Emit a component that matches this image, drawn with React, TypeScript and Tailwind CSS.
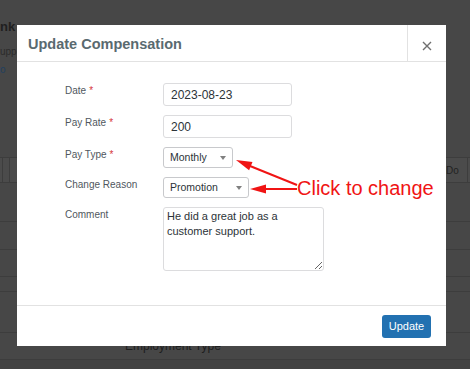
import React from 'react';

const Label = ({ text, required }: { text: string; required?: boolean }) => (
  <div className="pt-[1px] text-[10px] leading-[14px] text-[#50575e]">
    {text}
    {required && <span className="ml-[3px] text-[#d63638]">*</span>}
  </div>
);

const Select = ({ value, width }: { value: string; width: string }) => (
  <div
    className={`flex h-[21px] ${width} items-center justify-between rounded-[3px] border border-[#c8c9cc] bg-white pl-[6px] pr-[6px] text-[10.5px] text-[#2c3338]`}
  >
    <span>{value}</span>
    <svg width="6" height="4" viewBox="0 0 6 4">
      <path d="M0 0h6L3 4z" fill="#808080" />
    </svg>
  </div>
);

const App = () => {
  const inputCls =
    'h-[23px] w-[129px] rounded-[3px] border border-[#dcdcde] bg-white pl-[7px] text-[12px] text-[#2c3338] outline-none';

  return (
    <div className="relative h-[369px] w-[470px] overflow-hidden bg-[#474747] font-['Liberation_Sans',Arial,sans-serif]">
      {/* page behind the dialog */}
      <div className="h-[157px] pt-[19px]">
        <div className="text-[13px] font-bold leading-[16px] text-[#1f1f1f]">nk</div>
        <div className="mt-[11px] text-[10px] leading-[12px] text-[#2b2b2b]">upport</div>
        <div className="mt-[6px] text-[10px] leading-[12px] text-[#22405f]">o</div>
      </div>
      <div className="flex h-[26px] border-y border-[#3d3d3d] bg-[#4b4b4b]">
        <div className="w-[3px] border-r border-[#3d3d3d]" />
        <div className="w-[7px] border-r border-[#3d3d3d]" />
        <div className="flex-1" />
        <div className="flex w-[24px] items-center border-x border-[#3d3d3d] pl-[1px] text-[10px] text-[#222]">
          Do
        </div>
        <div className="w-[2px]" />
      </div>
      <div className="h-[39px] border-b border-[#3d3d3d]" />
      <div className="h-[28px] border-b border-[#3d3d3d]" />
      <div className="h-[27px] border-b border-[#3d3d3d]" />
      <div className="h-[15px] border-b border-[#3d3d3d]" />
      <div className="h-[41px] border-b border-[#3d3d3d]" />
      <div className="flex h-[27px] items-center border-b border-[#3d3d3d] pl-[125px] text-[12px] text-[#1e1e1e]">
        Employment Type
      </div>
      <div className="h-[9px] bg-[#424242]" />

      {/* dialog */}
      <div className="absolute left-[17px] top-[25px] flex h-[321px] w-[429px] flex-col bg-white">
        <div className="flex h-[37px] border-b border-[#e2e2e2]">
          <div className="flex flex-1 items-center pl-[11px] pt-[3px] text-[14.5px] font-bold text-[#5a6a6f]">
            Update Compensation
          </div>
          <div className="flex w-[39px] items-center justify-center border-l border-[#e2e2e2] pt-[5px]">
            <svg width="10" height="10" viewBox="0 0 10 10">
              <path d="M1 1l8 8M9 1l-8 8" stroke="#6f6f6f" strokeWidth="1.4" />
            </svg>
          </div>
        </div>

        <div className="flex-1 pl-[48px] pt-[21px]">
          <div className="grid grid-cols-[98px_auto] items-start gap-y-[9px]">
            <Label text="Date" required />
            <input className={inputCls} defaultValue="2023-08-23" readOnly />
            <Label text="Pay Rate" required />
            <input className={inputCls} defaultValue="200" readOnly />
            <Label text="Pay Type" required />
            <Select value="Monthly" width="w-[70px]" />
            <Label text="Change Reason" />
            <Select value="Promotion" width="w-[86px]" />
            <Label text="Comment" />
            <textarea
              className="h-[64px] w-[161px] rounded-[3px] border border-[#dcdcde] px-[3px] py-[1px] text-[11px] leading-[15px] text-[#2c3338] outline-none"
              defaultValue="He did a great job as a customer support."
              readOnly
            />
          </div>
        </div>

        <div className="flex h-[41px] items-center justify-end border-t border-[#e2e2e2] pr-[15px]">
          <button className="h-[23px] w-[49px] rounded-[3px] bg-[#2271b1] text-[11px] text-white">
            Update
          </button>
        </div>
      </div>

      {/* annotation */}
      <svg className="pointer-events-none absolute inset-0" width="470" height="369">
        <line x1="297" y1="185" x2="250" y2="166" stroke="#f01414" strokeWidth="2" />
        <polygon points="236,160 252.5,161.9 249.1,170.3" fill="#f01414" />
        <line x1="297" y1="189" x2="262" y2="189" stroke="#f01414" strokeWidth="2" />
        <polygon points="250,189 266,184.5 266,193.5" fill="#f01414" />
      </svg>
      <div className="pointer-events-none absolute left-[297px] top-[178px] text-[20px] leading-[20px] text-[#f01414]">
        Click to change
      </div>
    </div>
  );
};

export default App;
